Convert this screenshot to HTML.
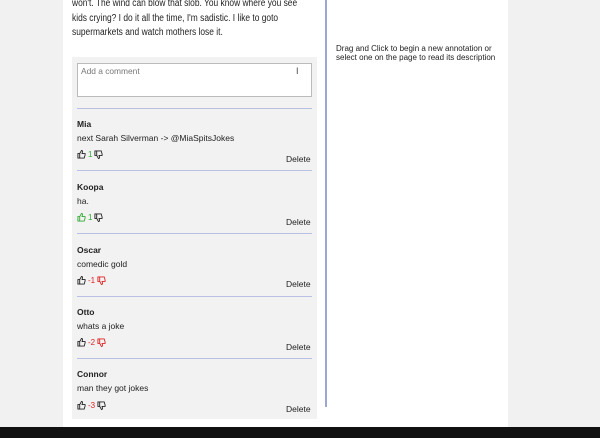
<!DOCTYPE html>
<html><head><style>
*{margin:0;padding:0;box-sizing:border-box}
body{width:600px;height:438px;background:#f1f1f2;font-family:"Liberation Sans",Arial,sans-serif;position:relative;overflow:hidden;color:#222}
.page{position:absolute;left:63px;top:0;width:445px;height:427px;background:#fff}
.txt{position:absolute;left:72px;top:-3px;font-size:10px;line-height:14.5px;color:#222;white-space:nowrap;transform:scaleX(0.84);transform-origin:0 0}
.vline{position:absolute;left:325px;top:0;width:2px;height:407px;background:#9aa8d8}
.help{position:absolute;left:336px;top:44px;font-size:8px;line-height:9px;color:#222}
.panel{position:absolute;left:72px;top:57px;width:245px;height:362px;background:#f2f2f2}
.box{position:absolute;left:77px;top:63px;width:235px;height:34px;background:#fff;border:1px solid #bbb;font-size:8.4px;color:#777;padding:2px 3px}
.cur{position:absolute;left:296px;top:66px;font-size:9px;color:#444}
.sep{position:absolute;left:77px;width:235px;height:1px;background:#b8c0e4}
.name{position:absolute;left:77px;font-size:8.5px;font-weight:bold}
.body{position:absolute;left:77px;font-size:8.5px}
.votes{position:absolute;left:77px;font-size:8px;display:flex;align-items:center;gap:2px}
.del{position:absolute;left:286px;font-size:8.5px}
.bar{position:absolute;left:0;top:427px;width:600px;height:11px;background:#111}
</style></head><body>
<div class="page"></div>
<div class="txt">won't. The wind can blow that slob. You know where you see<br>kids crying? I do it all the time, I'm sadistic. I like to goto<br>supermarkets and watch mothers lose it.</div>
<div class="vline"></div>
<div class="help">Drag and Click to begin a new annotation or<br>select one on the page to read its description</div>
<div class="panel"></div>
<div class="box">Add a comment</div>
<div class="cur">I</div>

<div class="sep" style="top:108px"></div>
<div class="name" style="top:119px">Mia</div>
<div class="body" style="top:133px">next Sarah Silverman -&gt; @MiaSpitsJokes</div>
<div class="votes" style="top:150px"><svg width="9" height="9" viewBox="0 0 10 10"><path d="M1 4h2v5H1zM3 4l2-3.5c1 0 1.3.7 1 2L5.6 4H9v1.5L8 9H3z" fill="none" stroke="#222" stroke-width="1"/></svg><span style="color:#3a3">1</span><svg width="9" height="9" viewBox="0 0 10 10"><path d="M1 6h2V1H1zM3 6l2 3.5c1 0 1.3-.7 1-2L5.6 6H9V4.5L8 1H3z" fill="none" stroke="#222" stroke-width="1"/></svg></div>
<div class="del" style="top:154px">Delete</div>

<div class="sep" style="top:170px"></div>
<div class="name" style="top:182px">Koopa</div>
<div class="body" style="top:196px">ha.</div>
<div class="votes" style="top:213px"><svg width="9" height="9" viewBox="0 0 10 10"><path d="M1 4h2v5H1zM3 4l2-3.5c1 0 1.3.7 1 2L5.6 4H9v1.5L8 9H3z" fill="none" stroke="#3a3" stroke-width="1"/></svg><span style="color:#3a3">1</span><svg width="9" height="9" viewBox="0 0 10 10"><path d="M1 6h2V1H1zM3 6l2 3.5c1 0 1.3-.7 1-2L5.6 6H9V4.5L8 1H3z" fill="none" stroke="#222" stroke-width="1"/></svg></div>
<div class="del" style="top:217px">Delete</div>

<div class="sep" style="top:233px"></div>
<div class="name" style="top:245px">Oscar</div>
<div class="body" style="top:259px">comedic gold</div>
<div class="votes" style="top:276px"><svg width="9" height="9" viewBox="0 0 10 10"><path d="M1 4h2v5H1zM3 4l2-3.5c1 0 1.3.7 1 2L5.6 4H9v1.5L8 9H3z" fill="none" stroke="#222" stroke-width="1"/></svg><span style="color:#d22">-1</span><svg width="9" height="9" viewBox="0 0 10 10"><path d="M1 6h2V1H1zM3 6l2 3.5c1 0 1.3-.7 1-2L5.6 6H9V4.5L8 1H3z" fill="none" stroke="#d22" stroke-width="1"/></svg></div>
<div class="del" style="top:279px">Delete</div>

<div class="sep" style="top:296px"></div>
<div class="name" style="top:307px">Otto</div>
<div class="body" style="top:321px">whats a joke</div>
<div class="votes" style="top:338px"><svg width="9" height="9" viewBox="0 0 10 10"><path d="M1 4h2v5H1zM3 4l2-3.5c1 0 1.3.7 1 2L5.6 4H9v1.5L8 9H3z" fill="none" stroke="#222" stroke-width="1"/></svg><span style="color:#d22">-2</span><svg width="9" height="9" viewBox="0 0 10 10"><path d="M1 6h2V1H1zM3 6l2 3.5c1 0 1.3-.7 1-2L5.6 6H9V4.5L8 1H3z" fill="none" stroke="#d22" stroke-width="1"/></svg></div>
<div class="del" style="top:342px">Delete</div>

<div class="sep" style="top:358px"></div>
<div class="name" style="top:369px">Connor</div>
<div class="body" style="top:383px">man they got jokes</div>
<div class="votes" style="top:401px"><svg width="9" height="9" viewBox="0 0 10 10"><path d="M1 4h2v5H1zM3 4l2-3.5c1 0 1.3.7 1 2L5.6 4H9v1.5L8 9H3z" fill="none" stroke="#222" stroke-width="1"/></svg><span style="color:#d22">-3</span><svg width="9" height="9" viewBox="0 0 10 10"><path d="M1 6h2V1H1zM3 6l2 3.5c1 0 1.3-.7 1-2L5.6 6H9V4.5L8 1H3z" fill="none" stroke="#222" stroke-width="1"/></svg></div>
<div class="del" style="top:404px">Delete</div>

<div class="bar"></div>
</body></html>
